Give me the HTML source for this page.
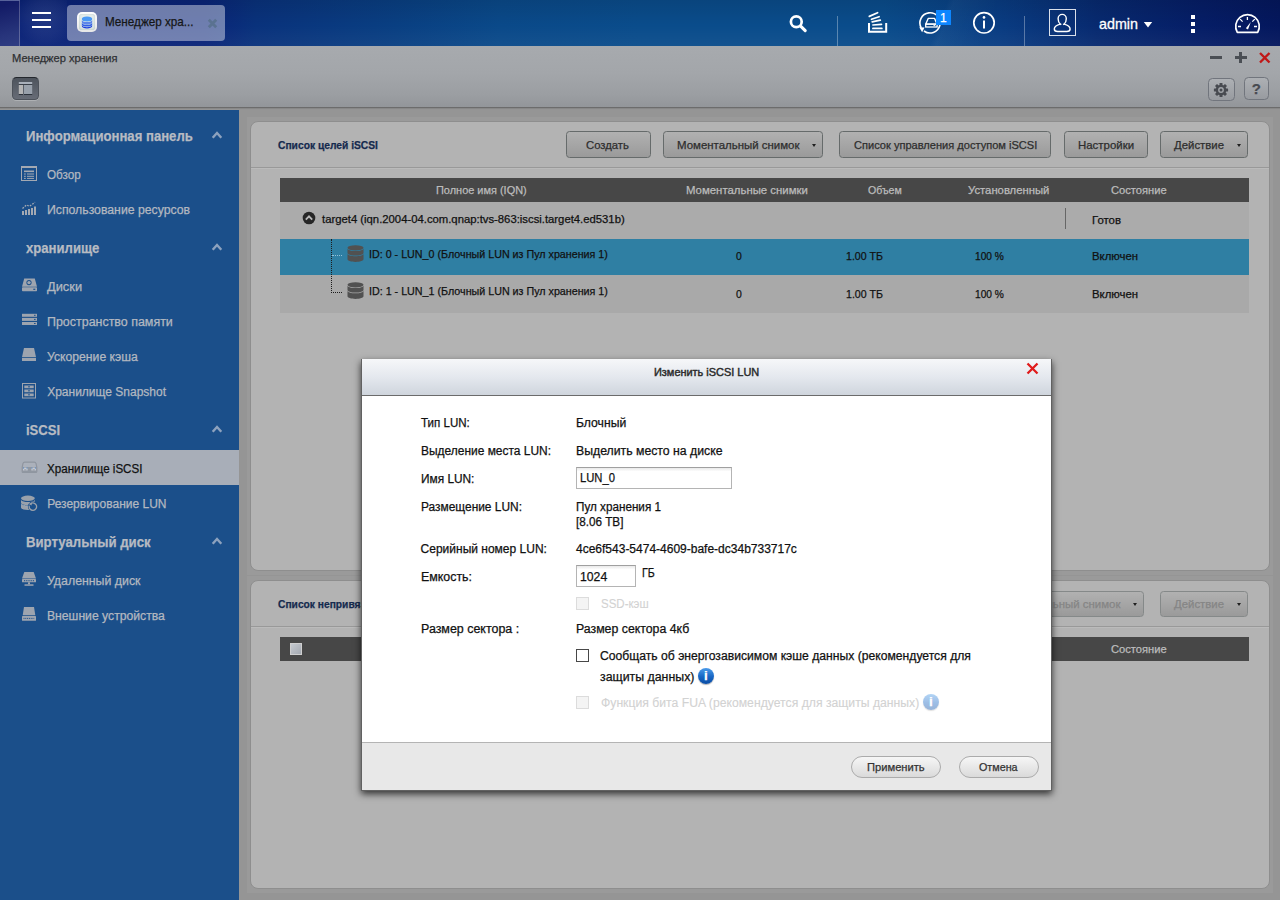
<!DOCTYPE html>
<html lang="ru">
<head>
<meta charset="utf-8">
<title>Менеджер хранения</title>
<style>
*{box-sizing:border-box;margin:0;padding:0}
html,body{width:1280px;height:900px;overflow:hidden;background:#959595;font-family:"Liberation Sans", sans-serif;}
.layer{position:absolute;left:0;top:0;width:1280px;height:900px;overflow:hidden}
.a{position:absolute;display:block}
.t{position:absolute;white-space:nowrap;line-height:1;transform-origin:0 50%;-webkit-text-stroke:.25px}
#topbar{left:0;top:0;width:1280px;height:46px;background:
 linear-gradient(180deg,rgba(0,0,0,.10) 0%,rgba(0,0,0,0) 55%,rgba(255,255,255,.04) 100%),
 linear-gradient(112deg,rgba(255,255,255,0) 73%,rgba(255,255,255,.03) 73.500%,rgba(255,255,255,0) 77%),
 linear-gradient(90deg,#0a2277 0%,#0a2478 16%,#09327c 20%,#093f82 31%,#0a4989 39%,#0a4c8b 50%,#0a4c8b 69%,#093c82 78%,#07296f 86%,#051d66 94%,#04175d 100%);}
#strip{left:0;top:0;width:20px;height:46px;background:linear-gradient(165deg,#131b66 10%,#27347b 70%,#2f3d83 100%);border-right:1px solid rgba(255,255,255,.25);border-top:1px solid rgba(255,255,255,.2)}
#hbglow{left:20px;top:0;width:47px;height:46px;background:radial-gradient(ellipse 32px 28px at 26px 18px,rgba(255,255,255,.10),rgba(255,255,255,.05) 60%,rgba(255,255,255,0) 100%)}
.hb{left:32px;width:19px;height:2.200px;background:#fff}
#tab{left:67px;top:5px;width:158px;height:36px;border-radius:4px;background:rgba(255,255,255,.41)}
#appico{left:77px;top:12px;width:20px;height:20px;border-radius:5px;background:linear-gradient(180deg,#fff,#e6e6e6)}
#appico i{position:absolute;left:2.200px;top:2px;width:15.600px;height:16px;border-radius:3px;background:linear-gradient(180deg,#e6eeec,#d6e2df);box-shadow:inset 0 0 1.500px rgba(60,90,90,.35)}
.sep{top:16px;width:1px;height:30px;background:rgba(255,255,255,.32)}
#badge{left:936.300px;top:10px;width:14.700px;height:15px;background:#0d86ff}
#winbar{left:0;top:46px;width:1280px;height:61px;background:linear-gradient(180deg,#a7aaae 0%,#a3a6aa 45%,#9b9ea2 80%,#93969a 100%)}
#winline{left:0;top:107px;width:1280px;height:3px;background:linear-gradient(180deg,#6c6c6c 0,#6c6c6c 34%,#888 34%,#888 67%,#949494 67%)}
#lbtn{left:12px;top:77px;width:27px;height:23px;border-radius:4.500px;background:linear-gradient(180deg,#4e545d,#676c76);border:1px solid #4d525a;border-top-color:#23272d;box-shadow:0 1px 0 rgba(255,255,255,.22)}
.tbtn{border-radius:4.500px;border:1px solid #71757d;background:linear-gradient(180deg,#adb0b4,#989ba0)}
#sidebar{left:0;top:110px;width:239px;height:790px;background:#1b4f8a}
#active{left:0;top:450px;width:239px;height:35px;background:#a8aeb8}
.panel{left:250px;width:1019.500px;border-radius:8px;background:#b3b3b3;border:1px solid #8e8e8e}
.pdiv{left:251px;width:1018px;height:2px;background:linear-gradient(180deg,#999 50%,#bbb 50%)}
.btn{top:131px;height:26.500px;border-radius:3.500px;border:1px solid #666b6b;background:linear-gradient(180deg,#b1b1b1,#9a9a9a)}
.thead{left:280px;width:969px;height:24px;background:#474747}
.row{left:280px;width:969px}
.arr{width:0;height:0;border-left:2.800px solid transparent;border-right:2.800px solid transparent;border-top:3.900px solid #1f1f1f}
#modal{left:361px;top:358.500px;width:690.500px;height:432.300px;background:#fff;border:1px solid #616161;border-top:0;box-shadow:0 3px 7px 0 rgba(0,0,0,.72)}
#mtitle{left:0;top:0;width:100%;height:37px;background:linear-gradient(180deg,#f6f7f9 0%,#e4e8ee 50%,#cfd5dd 100%);border-bottom:1px solid #6b6b6b}
#mfoot{left:0;top:383.500px;width:100%;height:47.800px;background:#e8e8e8;border-top:1px solid #b4b4b4}
.inp{height:21.500px;border:1px solid #b4b4b4;border-top-color:#a0a0a0;background:linear-gradient(180deg,#e9e9e9 0,#fff 3.500px)}
.cb{left:576px;width:13px;height:13px;background:#fff;border:1px solid #484848}
.cb.dis{background:#f4f4f4;border-color:#dcdcdc}
.pill{top:756px;height:22px;border-radius:11px;border:1px solid #ababab;background:linear-gradient(180deg,#f6f6f6,#dadada)}
.info{width:16.500px;height:16.500px;border-radius:50%;background:linear-gradient(180deg,#4a9bea 0%,#1766c4 55%,#0b4ca3 100%);box-shadow:0 1px 1px rgba(0,0,0,.3)}
</style>
</head>
<body>

<!-- ============ desktop top bar ============ -->
<div class="layer" id="app">
<div class="a" id="topbar"></div>
<div class="a" id="strip"></div>
<div class="a" id="hbglow"></div>
<div class="a hb" style="top:12px"></div><div class="a hb" style="top:19px"></div><div class="a hb" style="top:26px"></div>
<div class="a" id="tab"></div>
<div class="a" id="appico"><i></i></div>
<svg class="a" style="left:81px;top:15.500px" width="12" height="13" viewBox="0 0 12 13"><ellipse cx="6" cy="3" rx="5.200" ry="2.500" fill="#4b9af6"/><path d="M.8 4.200c.8 1.300 2.700 1.900 5.200 1.900s4.400-.6 5.200-1.900v2c0 1.300-2.300 2.200-5.200 2.200S.8 7.500.8 6.200z" fill="#5c86ea"/><path d="M.8 6.900c.8 1.300 2.700 1.900 5.200 1.900s4.400-.6 5.200-1.900v1.500c0 1.300-2.300 2.200-5.200 2.200S.8 9.700.8 8.400z" fill="#2f5fe6"/><path d="M.8 9.300c.8 1.300 2.700 1.900 5.200 1.900s4.400-.6 5.200-1.900v.8c0 1.400-2.300 2.500-5.200 2.500S.8 11.500.8 10.100z" fill="#1c3fe0"/></svg>
<span class="t" id="t0" style="left:104.7px;top:15.0px;font-size:13.5px;color:#151515;transform:scaleX(0.866);-webkit-text-stroke:0.25px #151515;">Менеджер хра...</span>
<svg class="a" style="left:207px;top:18px" width="11" height="11" viewBox="0 0 11 11"><path d="M1.800 1.800l7.400 7.400M9.200 1.800l-7.400 7.400" stroke="#5a7291" stroke-width="2.900" fill="none"/></svg>

<svg class="a" style="left:786px;top:11px" width="24" height="24" viewBox="0 0 24 24"><circle cx="10.300" cy="10.800" r="5.400" fill="none" stroke="#fff" stroke-width="2.700"/><path d="M14.900 15.400l4.300 4.300" stroke="#fff" stroke-width="3.100" stroke-linecap="round"/></svg>
<div class="a sep" style="left:837px"></div>
<svg class="a" style="left:866px;top:10px" width="24" height="24" viewBox="0 0 24 24"><g fill="none" stroke="#fff"><path d="M3 13v8.700h17.200V13" stroke-width="2"/><path d="M3.300 6.400l8.300-3.700M5.500 9.300l7.600-2.600M6.200 11.900l8.100-1.700M6.900 15l8.600-.6M6.900 18.400h9" stroke-width="1.700" stroke-linecap="round"/></g></svg>
<svg class="a" style="left:917px;top:10px" width="26" height="26" viewBox="0 0 26 26"><g fill="none" stroke="#fff"><path d="M4.200 17.800a10.100 10.100 0 1 1 2.800 3.200" stroke-width="1.600"/><path d="M8.800 14.100l2.400-5.700h6.400l2.400 5.700z" stroke-width="1.400" stroke-linejoin="round"/><rect x="8.700" y="14.100" width="11.400" height="2.900" stroke-width="1.300"/><path d="M16.500 15.600h1.800" stroke-width="1"/></g><path d="M2.300 17.200l5.200.4-2.400 4.600z" fill="#fff"/></svg>
<div class="a" id="badge"></div>
<span class="t" id="t1" style="left:940.0px;top:11.6px;font-size:12px;color:#fff;">1</span>
<svg class="a" style="left:971px;top:10px" width="26" height="26" viewBox="0 0 26 26"><circle cx="13" cy="12.800" r="10.200" fill="none" stroke="#fff" stroke-width="1.700"/><circle cx="13" cy="7.400" r="1.300" fill="#fff"/><path d="M13 10.500v8" stroke="#fff" stroke-width="2"/></svg>
<div class="a sep" style="left:1024px"></div>
<svg class="a" style="left:1048px;top:8px" width="29" height="29" viewBox="0 0 29 29"><rect x="1.500" y="1.500" width="26" height="26" fill="none" stroke="rgba(255,255,255,.85)" stroke-width="1"/><g fill="none" stroke="#fff" stroke-width="1.400" stroke-linejoin="round"><path d="M13.300 16.700l-.9-.6C11 15 10.100 13.100 10.100 10.700c0-2.500 1.800-4.300 4.100-4.300s4.100 1.800 4.100 4.300c0 2.400-.9 4.300-2.300 5.400l-.9.600"/><path d="M12.400 16.100C9.200 17 6.300 18.500 6.300 21c0 1.600 1.300 2.500 3.300 2.500h9.200c2 0 3.300-.9 3.300-2.500 0-2.500-2.900-4-6.100-4.900"/></g></svg>
<span class="t" id="t2" style="left:1099.0px;top:16.3px;font-size:15px;color:#fff;transform:scaleX(0.954);-webkit-text-stroke:0.3px #fff;">admin</span>
<svg class="a" style="left:1143px;top:21px" width="10" height="8" viewBox="0 0 10 8"><path d="M.8 1h8.400l-4.200 5.600z" fill="#fff"/></svg>
<div class="a" style="left:1190.500px;top:15px;width:4.200px;height:4.200px;background:#fff"></div>
<div class="a" style="left:1190.500px;top:22px;width:4.200px;height:4.200px;background:#fff"></div>
<div class="a" style="left:1190.500px;top:29px;width:4.200px;height:4.200px;background:#fff"></div>
<svg class="a" style="left:1233px;top:12px" width="29" height="23" viewBox="0 0 29 23"><g fill="none" stroke="#fff"><path d="M4.300 20.400A11.800 11.800 0 1 1 24.700 20.400z" stroke-width="1.700" stroke-linejoin="round"/><path d="M14.400 5.100v3M7.100 7.100l2.500 2.500M21.800 7.100l-2.500 2.500M5 14.500h3M21 14.500h3" stroke-width="1.300"/></g><path d="M12.900 16.200l2.100 1.300 2.800-7.500z" fill="#fff"/></svg>

<!-- ============ window title / toolbar ============ -->
<div class="a" id="winbar"></div>
<div class="a" id="winline"></div>
<span class="t" id="t3" style="left:12.4px;top:52.6px;font-size:11px;color:#2f3033;transform:scaleX(1.010);">Менеджер хранения</span>
<div class="a" id="lbtn"></div>
<svg class="a" style="left:18px;top:81px" width="15" height="15" viewBox="0 0 15 15"><rect x=".8" y="1" width="13.400" height="2" fill="#a9b0ba"/><rect x=".8" y="3" width="13.400" height="1" fill="#3a4049"/><rect x=".8" y="4" width="4.200" height="9" fill="#b5b5b5"/><rect x="6" y="4" width="8.200" height="9" fill="#98a0aa"/><rect x=".8" y="13" width="4.200" height="1" fill="#2c323b"/><rect x="6" y="13" width="8.200" height="1" fill="#2c323b"/></svg>
<div class="a" style="left:1210px;top:56px;width:12px;height:3px;background:#4a4e54"></div>
<div class="a" style="left:1235px;top:56px;width:11.500px;height:3px;background:#4a4e54"></div>
<div class="a" style="left:1239.300px;top:51.800px;width:3px;height:11.500px;background:#4a4e54"></div>
<svg class="a" style="left:1258px;top:51px" width="14" height="14" viewBox="0 0 14 14"><path d="M2 2l9.500 9.500M11.500 2L2 11.500" stroke="#c01818" stroke-width="2.400" fill="none"/></svg>
<div class="a tbtn" style="left:1208px;top:78px;width:27px;height:23px"></div>
<svg class="a" style="left:1212.900px;top:81.800px" width="16" height="16" viewBox="0 0 16 16"><g transform="translate(8 8)"><g fill="#484b51"><rect x="-1.500" y="-7.100" width="3" height="14.200" rx=".4"/><rect x="-1.500" y="-7.100" width="3" height="14.200" rx=".4" transform="rotate(45)"/><rect x="-1.500" y="-7.100" width="3" height="14.200" rx=".4" transform="rotate(90)"/><rect x="-1.500" y="-7.100" width="3" height="14.200" rx=".4" transform="rotate(135)"/><circle r="5.300"/></g><circle r="2.900" fill="#a2a5aa"/><circle r="1.500" fill="#484b51"/></g></svg>
<div class="a tbtn" style="left:1244px;top:77px;width:24.500px;height:22.500px"></div>
<span class="t" id="t4" style="left:1251.7px;top:80.9px;font-size:15px;color:#484b51;font-weight:700;">?</span>

<!-- ============ sidebar ============ -->
<div class="a" id="sidebar"></div>
<div class="a" id="active"></div>
<span class="t" id="t5" style="left:26.2px;top:129.1px;font-size:14.5px;color:#b7bbc2;font-weight:700;transform:scaleX(0.905);">Информационная панель</span><svg class="a" style="left:210px;top:129.3px" width="14" height="12" viewBox="0 0 14 12"><path d="M2.700 8.800 7 4 11.300 8.800" fill="none" stroke="#8da2be" stroke-width="2.400"/></svg>
<span class="t" id="t6" style="left:26.0px;top:240.5px;font-size:14.5px;color:#b7bbc2;font-weight:700;transform:scaleX(0.905);">хранилище</span><svg class="a" style="left:210px;top:241.3px" width="14" height="12" viewBox="0 0 14 12"><path d="M2.700 8.800 7 4 11.300 8.800" fill="none" stroke="#8da2be" stroke-width="2.400"/></svg>
<span class="t" id="t7" style="left:26.0px;top:422.7px;font-size:14.5px;color:#b7bbc2;font-weight:700;transform:scaleX(0.898);">iSCSI</span><svg class="a" style="left:210px;top:423.3px" width="14" height="12" viewBox="0 0 14 12"><path d="M2.700 8.800 7 4 11.300 8.800" fill="none" stroke="#8da2be" stroke-width="2.400"/></svg>
<span class="t" id="t8" style="left:26.0px;top:535.0px;font-size:14.5px;color:#b7bbc2;font-weight:700;transform:scaleX(0.909);">Виртуальный диск</span><svg class="a" style="left:210px;top:535.3px" width="14" height="12" viewBox="0 0 14 12"><path d="M2.700 8.800 7 4 11.300 8.800" fill="none" stroke="#8da2be" stroke-width="2.400"/></svg>
<span class="t" id="t9" style="left:47.2px;top:168.8px;font-size:12px;color:#b3b8c0;transform:scaleX(0.975);">Обзор</span>
<span class="t" id="t10" style="left:47.2px;top:203.8px;font-size:12px;color:#b3b8c0;transform:scaleX(1.021);">Использование ресурсов</span>
<span class="t" id="t11" style="left:47.2px;top:280.8px;font-size:12px;color:#b3b8c0;transform:scaleX(1.070);">Диски</span>
<span class="t" id="t12" style="left:47.2px;top:315.8px;font-size:12px;color:#b3b8c0;transform:scaleX(1.037);">Пространство памяти</span>
<span class="t" id="t13" style="left:47.2px;top:350.8px;font-size:12px;color:#b3b8c0;transform:scaleX(1.016);">Ускорение кэша</span>
<span class="t" id="t14" style="left:47.2px;top:385.8px;font-size:12px;color:#b3b8c0;">Хранилище Snapshot</span>
<span class="t" id="t15" style="left:47.2px;top:463.1px;font-size:12px;color:#111;transform:scaleX(0.966);">Хранилище iSCSI</span>
<span class="t" id="t16" style="left:47.2px;top:498.1px;font-size:12px;color:#b3b8c0;">Резервирование LUN</span>
<span class="t" id="t17" style="left:47.2px;top:574.8px;font-size:12px;color:#b3b8c0;transform:scaleX(1.028);">Удаленный диск</span>
<span class="t" id="t18" style="left:47.2px;top:609.8px;font-size:12px;color:#b3b8c0;transform:scaleX(1.015);">Внешние устройства</span>
<!-- sidebar icons -->
<svg class="a" style="left:20px;top:165px" width="18" height="17" viewBox="0 0 18 17"><g fill="none" stroke="#a3a9b3"><rect x="1.500" y="1.500" width="15" height="14" stroke-width="1"/><path d="M1 2h16" stroke-width="2"/><path d="M4 6.300h10" stroke-width="1.600"/><path d="M4 9h1.800M7 9h7M4 11.300h1.800M7 11.300h7M4 13.400h1.800M7 13.400h7" stroke-width="1"/></g></svg>
<svg class="a" style="left:21px;top:200px" width="17" height="16" viewBox="0 0 17 16"><g fill="#a3a9b3"><rect x="1" y="11" width="2" height="4"/><rect x="4" y="10" width="2" height="5"/><rect x="7" y="9" width="2" height="6"/><rect x="10" y="8" width="2" height="7"/><rect x="13" y="6.500" width="2" height="8.500"/></g><path d="M1.500 8.500l4-3.500 3 1.300 5.500-4" fill="none" stroke="#a3a9b3" stroke-width="1.300" stroke-dasharray="1.800 1.200"/></svg>
<svg class="a" style="left:21px;top:278px" width="17" height="15" viewBox="0 0 17 15"><g fill="#9da4af"><path d="M3.200 .5h10.600l2.200 8.200H1z"/><rect x="1" y="9.300" width="15" height="4" rx=".8"/></g><circle cx="8" cy="4.600" r="2.600" fill="#1b4f8a"/><circle cx="8" cy="4.600" r="1.700" fill="#9da4af"/><rect x="12.300" y="10.700" width="2" height="1.200" fill="#1b4f8a"/></svg>
<svg class="a" style="left:21px;top:313px" width="17" height="13" viewBox="0 0 17 13"><g fill="#9da4af"><rect x="1" y=".8" width="15" height="3"/><rect x="1" y="4.900" width="15" height="3"/><rect x="1" y="9" width="15" height="3"/></g><g fill="#1b4f8a"><rect x="13" y="1.800" width="1.600" height="1"/><rect x="13" y="5.900" width="1.600" height="1"/><rect x="13" y="10" width="1.600" height="1"/></g></svg>
<svg class="a" style="left:21px;top:347px" width="17" height="15" viewBox="0 0 17 15"><g fill="#9da4af"><path d="M3 1h10l2 9H1z"/><rect x="1" y="10.800" width="14" height="3.200"/></g></svg>
<svg class="a" style="left:21px;top:382px" width="17" height="17" viewBox="0 0 17 17"><rect x="1.500" y="1.500" width="13" height="14.500" fill="none" stroke="#9da4af" stroke-width="1"/><g fill="#9da4af"><rect x="3.300" y="3.500" width="9.400" height="2.700"/><rect x="3.300" y="7.500" width="9.400" height="2.700"/><rect x="3.300" y="11.500" width="9.400" height="2.700"/></g><g fill="#1b4f8a"><rect x="7" y="4.400" width="2" height=".9"/><rect x="7" y="8.400" width="2" height=".9"/><rect x="7" y="12.400" width="2" height=".9"/></g></svg>
<svg class="a" style="left:21px;top:461px" width="17" height="13" viewBox="0 0 17 13"><path d="M3.800 1.200h9.400c1 0 1.600.5 1.900 1.400l.7 3.800v4c0 .7-.4 1.100-1.100 1.100H2.300c-.7 0-1.100-.4-1.100-1.100v-4l.7-3.800c.3-.9.900-1.400 1.900-1.400z" fill="#abb1bb" stroke="#8f959f" stroke-width="1.200"/><path d="M1.200 6h14.600v4.400c0 .7-.4 1.100-1.100 1.100H2.300c-.7 0-1.100-.4-1.100-1.100z" fill="#9097a1"/><rect x="2" y="6.600" width="4.600" height="2.900" fill="#c5cad2"/><rect x="10.400" y="6.600" width="4.600" height="2.900" fill="#c5cad2"/><path d="M2 6.600h1.100v.9H2zM5.500 6.600h1.100v.9H5.500zM10.400 6.600h1.100v.9h-1.100zM13.900 6.600H15v.9h-1.100z" fill="#4a7fc0"/><rect x="3.200" y="8.300" width="2.200" height="1.200" fill="#969ca6"/><rect x="11.600" y="8.300" width="2.200" height="1.200" fill="#969ca6"/></svg>
<svg class="a" style="left:20px;top:495px" width="19" height="17" viewBox="0 0 19 17"><g fill="#9aa1ab"><ellipse cx="7.900" cy="3.300" rx="6.900" ry="2.700"/><path d="M1 5c1.200 1.500 3.700 2.100 6.900 2.100s5.700-.6 6.900-2.100v2.400c0 1.500-3.100 2.600-6.900 2.600S1 8.900 1 7.400z"/><path d="M1 9c1.200 1.500 3.700 2.100 6.900 2.100s5.700-.6 6.900-2.100v3.400c0 1.500-3.100 2.600-6.900 2.600S1 13.900 1 12.400z"/><path d="M1 8.700c1.200 1.500 3.700 2.100 6.900 2.100s5.700-.6 6.900-2.100" fill="none" stroke="#b9bec6" stroke-width=".7"/></g><circle cx="12.900" cy="11.500" r="5" fill="#1b4f8a"/><path d="M10.600 8.700a3.700 3.700 0 1 1-1.300 2" fill="none" stroke="#9aa1ab" stroke-width="1.300"/><path d="M8.600 8.900l3.300-1.500-.3 3.100z" fill="#9aa1ab"/></svg>
<svg class="a" style="left:21px;top:571px" width="17" height="16" viewBox="0 0 17 16"><g fill="#9da4af"><path d="M3.300 1h9.400l2.300 6.500H1z"/><rect x="1" y="8" width="14" height="3.300" rx=".6"/><rect x="7" y="11.300" width="2" height="2"/><rect x="3.500" y="13.300" width="9" height="1.500"/></g><g fill="#1b4f8a"><rect x="3" y="9.200" width="1.200" height="1"/><rect x="5.200" y="9.200" width="1.200" height="1"/><rect x="7.400" y="9.200" width="1.200" height="1"/><rect x="9.600" y="9.200" width="1.200" height="1"/><rect x="11.800" y="9.200" width="1.200" height="1"/></g></svg>
<svg class="a" style="left:21px;top:606px" width="17" height="16" viewBox="0 0 17 16"><g fill="#9da4af"><path d="M3 1h10l1.300 8.300H1.700z"/><rect x="1" y="10" width="14" height="4.800" rx=".6"/></g><path d="M2.500 12.400h11" stroke="#1b4f8a" stroke-width="1" stroke-dasharray="1 .8"/></svg>

<!-- ============ main: iSCSI target list panel ============ -->
<div class="a" style="left:247px;top:117px;width:1026px;height:776px;background:#9a9a9a"></div>
<div class="a" style="left:247px;top:575px;width:1026px;height:1px;background:#959595"></div>
<div class="a panel" style="top:121px;height:449.500px"></div>
<span class="t" id="t19" style="left:278.0px;top:139.7px;font-size:11px;color:#152a4e;font-weight:700;transform:scaleX(0.933);">Список целей iSCSI</span>
<div class="a btn" style="left:566px;width:85px"></div><span class="t" id="t20" style="left:586.3px;top:139.5px;font-size:11px;color:#2e2e2e;transform:scaleX(1.026);">Создать</span>
<div class="a btn" style="left:663px;width:159.500px"></div><span class="t" id="t21" style="left:676.5px;top:139.5px;font-size:11px;color:#2e2e2e;transform:scaleX(1.040);">Моментальный снимок</span><div class="a arr" style="left:811.500px;top:143.500px"></div>
<div class="a btn" style="left:839px;width:211.500px"></div><span class="t" id="t22" style="left:853.5px;top:139.5px;font-size:11px;color:#2e2e2e;transform:scaleX(1.006);">Список управления доступом iSCSI</span>
<div class="a btn" style="left:1063.500px;width:84.500px"></div><span class="t" id="t23" style="left:1077.5px;top:139.5px;font-size:11px;color:#2e2e2e;transform:scaleX(1.040);">Настройки</span>
<div class="a btn" style="left:1160px;width:88px"></div><span class="t" id="t24" style="left:1174.2px;top:139.5px;font-size:11px;color:#2e2e2e;transform:scaleX(1.034);">Действие</span><div class="a arr" style="left:1236.500px;top:143.500px"></div>
<div class="a pdiv" style="top:167px"></div>
<div class="a thead" style="top:178px"></div>
<span class="t" id="t25" style="left:436.2px;top:185.4px;font-size:11px;color:#bcbcbc;transform:scaleX(0.995);">Полное имя (IQN)</span>
<span class="t" id="t26" style="left:685.6px;top:185.4px;font-size:11px;color:#bcbcbc;transform:scaleX(1.035);">Моментальные снимки</span>
<span class="t" id="t27" style="left:867.7px;top:185.4px;font-size:11px;color:#bcbcbc;transform:scaleX(0.964);">Объем</span>
<span class="t" id="t28" style="left:968.0px;top:185.4px;font-size:11px;color:#bcbcbc;transform:scaleX(1.026);">Установленный</span>
<span class="t" id="t29" style="left:1110.8px;top:185.4px;font-size:11px;color:#bcbcbc;transform:scaleX(1.015);">Состояние</span>
<div class="a row" style="top:202px;height:37px;background:#ababab"></div>
<div class="a row" style="top:239px;height:36px;background:#2f7fa3"></div>
<div class="a row" style="top:275px;height:37.500px;background:#a9a9a9"></div>
<svg class="a" style="left:302px;top:211px" width="14" height="14" viewBox="0 0 14 14"><circle cx="7" cy="7" r="6.300" fill="#262626"/><path d="M3.800 8.600L7 5.300l3.200 3.300" fill="none" stroke="#b9b9b9" stroke-width="1.800"/></svg>
<span class="t" id="t30" style="left:322.0px;top:213.8px;font-size:11px;color:#111;transform:scaleX(1.027);">target4 (iqn.2004-04.com.qnap:tvs-863:iscsi.target4.ed531b)</span>
<div class="a" style="left:1064.500px;top:207.500px;width:1px;height:21px;background:#666"></div>
<span class="t" id="t31" style="left:1092.0px;top:214.7px;font-size:11px;color:#111;transform:scaleX(1.036);">Готов</span>
<div class="a" style="left:331px;top:239px;width:0;height:54px;border-left:1px dotted #1c1c1c"></div>
<div class="a" style="left:332px;top:255px;width:10px;height:0;border-top:1px dotted #93c0d6"></div>
<div class="a" style="left:331px;top:292px;width:11px;height:0;border-top:1px dotted #1c1c1c"></div>
<svg class="a" style="left:346.5px;top:244.5px" width="17" height="18" viewBox="0 0 17 18"><g fill="#515151"><ellipse cx="8.500" cy="2.800" rx="8" ry="2.600"/><path d="M.5 3.500c0 1.440 3.580 2.600 8 2.600s8-1.160 8-2.600v4.500c0 1.440-3.580 2.600-8 2.600s-8-1.160-8-2.600z"/><path d="M.5 8.700c0 1.440 3.580 2.600 8 2.600s8-1.160 8-2.600v5.600c0 1.440-3.580 2.600-8 2.600s-8-1.160-8-2.600z"/></g></svg>
<svg class="a" style="left:346.5px;top:281.5px" width="17" height="18" viewBox="0 0 17 18"><g fill="#515151"><ellipse cx="8.500" cy="2.800" rx="8" ry="2.600"/><path d="M.5 3.500c0 1.440 3.580 2.600 8 2.600s8-1.160 8-2.600v4.500c0 1.440-3.580 2.600-8 2.600s-8-1.160-8-2.600z"/><path d="M.5 8.700c0 1.440 3.580 2.600 8 2.600s8-1.160 8-2.600v5.600c0 1.440-3.580 2.600-8 2.600s-8-1.160-8-2.600z"/></g></svg>
<span class="t" id="t32" style="left:369.0px;top:248.9px;font-size:11px;color:#111;transform:scaleX(0.974);">ID: 0 - LUN_0 (Блочный LUN из Пул хранения 1)</span>
<span class="t" id="t33" style="left:736.2px;top:251.3px;font-size:11px;color:#111;transform:scaleX(0.947);">0</span>
<span class="t" id="t34" style="left:846.0px;top:251.3px;font-size:11px;color:#111;transform:scaleX(0.963);">1.00 ТБ</span>
<span class="t" id="t35" style="left:975.4px;top:251.3px;font-size:11px;color:#111;transform:scaleX(0.926);">100 %</span>
<span class="t" id="t36" style="left:1092.0px;top:251.3px;font-size:11px;color:#111;transform:scaleX(1.031);">Включен</span>
<span class="t" id="t37" style="left:369.0px;top:285.8px;font-size:11px;color:#111;transform:scaleX(0.974);">ID: 1 - LUN_1 (Блочный LUN из Пул хранения 1)</span>
<span class="t" id="t38" style="left:736.2px;top:288.5px;font-size:11px;color:#111;transform:scaleX(0.947);">0</span>
<span class="t" id="t39" style="left:846.0px;top:288.5px;font-size:11px;color:#111;transform:scaleX(0.963);">1.00 ТБ</span>
<span class="t" id="t40" style="left:975.4px;top:288.5px;font-size:11px;color:#111;transform:scaleX(0.926);">100 %</span>
<span class="t" id="t41" style="left:1092.0px;top:288.5px;font-size:11px;color:#111;transform:scaleX(1.031);">Включен</span>

<!-- ============ main: un-mapped LUN list panel ============ -->
<div class="a panel" style="top:580px;height:308.500px"></div>
<span class="t" id="t42" style="left:278.4px;top:598.9px;font-size:11px;color:#152a4e;font-weight:700;transform:scaleX(0.931);">Список непривязанных iSCSI LUN</span>
<div class="a btn" style="left:984px;top:590.500px;width:159.500px;border-color:#858989"></div><span class="t" id="t43" style="left:997.7px;top:598.9px;font-size:11px;color:#858585;transform:scaleX(1.040);">Моментальный снимок</span><div class="a arr" style="left:1132.500px;top:603px"></div>
<div class="a btn" style="left:1160px;top:590.500px;width:88px;border-color:#858989"></div><span class="t" id="t44" style="left:1174.2px;top:598.9px;font-size:11px;color:#858585;transform:scaleX(1.034);">Действие</span><div class="a arr" style="left:1236.500px;top:603px"></div>
<div class="a pdiv" style="top:626px"></div>
<div class="a thead" style="top:637px"></div>
<div class="a" style="left:289.500px;top:642.500px;width:12.500px;height:12.500px;border:1px solid #cfcfcf;background:linear-gradient(135deg,#c6cad0,#a4a9b1)"></div>
<span class="t" id="t45" style="left:1110.8px;top:644.2px;font-size:11px;color:#bcbcbc;transform:scaleX(1.015);">Состояние</span>
</div>

<!-- ============ modal dialog: edit iSCSI LUN ============ -->
<div class="layer" id="dlg">
<div class="a" id="modal">
  <div class="a" id="mtitle"></div>
  <div class="a" id="mfoot"></div>
</div>
<span class="t" id="t46" style="left:653.7px;top:366.6px;font-size:11px;color:#2c2c2c;transform:scaleX(0.994);-webkit-text-stroke:.45px #2c2c2c;">Изменить iSCSI LUN</span>
<svg class="a" style="left:1025px;top:361px" width="15" height="15" viewBox="0 0 15 15"><path d="M2.500 2.500l10 10M12.500 2.500l-10 10" stroke="#e01b1b" stroke-width="2.300" fill="none"/></svg>
<span class="t" id="t47" style="left:420.6px;top:417.2px;font-size:12px;color:#111;transform:scaleX(0.963);">Тип LUN:</span><span class="t" id="t48" style="left:576.0px;top:417.2px;font-size:12px;color:#111;transform:scaleX(1.014);">Блочный</span>
<span class="t" id="t49" style="left:420.6px;top:444.5px;font-size:12px;color:#111;transform:scaleX(0.996);">Выделение места LUN:</span><span class="t" id="t50" style="left:576.0px;top:444.5px;font-size:12px;color:#111;transform:scaleX(1.022);">Выделить место на диске</span>
<span class="t" id="t51" style="left:420.6px;top:472.6px;font-size:12px;color:#111;transform:scaleX(0.988);">Имя LUN:</span><div class="a inp" style="left:576px;top:467px;width:156px"></div><span class="t" id="t52" style="left:580.3px;top:472.3px;font-size:12px;color:#111;transform:scaleX(0.937);">LUN_0</span>
<span class="t" id="t53" style="left:420.6px;top:500.8px;font-size:12px;color:#111;transform:scaleX(0.993);">Размещение LUN:</span><span class="t" id="t54" style="left:576.0px;top:500.8px;font-size:12px;color:#111;transform:scaleX(0.975);">Пул хранения 1</span><span class="t" id="t55" style="left:576.0px;top:516.3px;font-size:12px;color:#111;transform:scaleX(0.978);">[8.06 TB]</span>
<span class="t" id="t56" style="left:420.6px;top:542.8px;font-size:12px;color:#111;">Серийный номер LUN:</span><span class="t" id="t57" style="left:576.0px;top:542.8px;font-size:12px;color:#111;">4ce6f543-5474-4609-bafe-dc34b733717c</span>
<span class="t" id="t58" style="left:420.6px;top:570.8px;font-size:12px;color:#111;transform:scaleX(1.032);">Емкость:</span><div class="a inp" style="left:576px;top:565px;width:60px"></div><span class="t" id="t59" style="left:580.3px;top:570.8px;font-size:12px;color:#111;transform:scaleX(1.019);">1024</span><span class="t" id="t60" style="left:641.9px;top:567.3px;font-size:12px;color:#111;transform:scaleX(0.890);">ГБ</span>
<div class="a cb dis" style="top:597px"></div><span class="t" id="t61" style="left:600.8px;top:597.8px;font-size:12px;color:#d2d2d2;transform:scaleX(0.958);-webkit-text-stroke:.1px;">SSD-кэш</span>
<span class="t" id="t62" style="left:420.6px;top:622.7px;font-size:12px;color:#111;transform:scaleX(1.037);">Размер сектора :</span><span class="t" id="t63" style="left:576.0px;top:622.7px;font-size:12px;color:#111;transform:scaleX(1.026);">Размер сектора 4кб</span>
<div class="a cb" style="top:649px"></div><span class="t" id="t64" style="left:600.4px;top:650.0px;font-size:12px;color:#111;transform:scaleX(1.013);">Сообщать об энергозависимом кэше данных (рекомендуется для</span>
<span class="t" id="t65" style="left:600.4px;top:670.8px;font-size:12px;color:#111;transform:scaleX(1.029);">защиты данных)</span><div class="a info" style="left:697.700px;top:667.700px"></div><span class="t" id="t66" style="left:704.1px;top:669.3px;font-size:13.5px;color:#fff;font-weight:700;">i</span>
<div class="a cb dis" style="top:696px"></div><span class="t" id="t67" style="left:600.8px;top:697.0px;font-size:12px;color:#d2d2d2;transform:scaleX(1.017);-webkit-text-stroke:.1px;">Функция бита FUA (рекомендуется для защиты данных)</span><div class="a info" style="left:922.500px;top:693.700px;opacity:.42"></div><span class="t" id="t68" style="left:928.9px;top:695.3px;font-size:13.5px;color:#fff;font-weight:700;">i</span>
<div class="a pill" style="left:851px;width:90px"></div><span class="t" id="t69" style="left:867.0px;top:762.3px;font-size:11px;color:#333;transform:scaleX(1.015);">Применить</span>
<div class="a pill" style="left:959px;width:80px"></div><span class="t" id="t70" style="left:979.4px;top:762.3px;font-size:11px;color:#333;transform:scaleX(0.978);">Отмена</span>
</div>

</body>
</html>
